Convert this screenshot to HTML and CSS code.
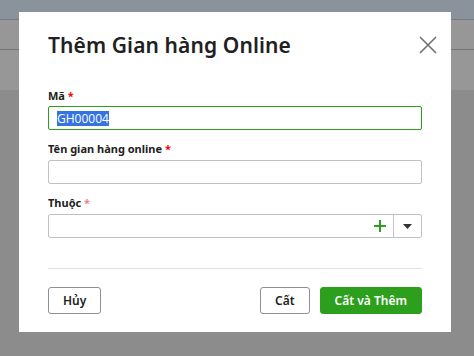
FILE: index.html
```html
<!DOCTYPE html>
<html>
<head>
    <title>Thêm Gian hàng Online</title>
    <link rel="stylesheet" href="styles.css">
</head>
<body>
    <div class="page">
        <div class="topbar"></div>
        <div class="toolbar"></div>
        <div class="subbar"></div>
        <div class="content"></div>
    </div>

    <div class="overlay">
        <div class="modal">
            <button class="close" aria-label="Đóng">
                <svg width="18" height="18" viewBox="0 0 18 18">
                    <path d="M1 1 L17 17 M17 1 L1 17" stroke="#6e6e6e" stroke-width="1.6" fill="none"/>
                </svg>
            </button>
            <h1>Thêm Gian hàng Online</h1>

            <div class="field">
                <label for="code">Mã <span class="req">*</span></label>
                <div class="input focus"><span class="sel">GH00004</span></div>
            </div>
            <div class="field">
                <label for="name">Tên gian hàng online <span class="req">*</span></label>
                <div class="input"></div>
            </div>
            <div class="field">
                <label for="parent">Thuộc <span class="req light">*</span></label>
                <div class="input combo">
                    <div class="combo-text"></div>
                    <span class="plus">
                        <svg width="12" height="12" viewBox="0 0 12 12">
                            <path d="M6 0 V12 M0 6 H12" stroke="#2ca01c" stroke-width="2"/>
                        </svg>
                    </span>
                    <span class="arrow">
                        <svg width="9" height="5" viewBox="0 0 9 5">
                            <path d="M0 0 H9 L4.5 5 Z" fill="#333"/>
                        </svg>
                    </span>
                </div>
            </div>

            <div class="footer">
                <button class="btn">Hủy</button>
                <div class="right">
                    <button class="btn">Cất</button>
                    <button class="btn primary">Cất và Thêm</button>
                </div>
            </div>
        </div>
    </div>
</body>
</html>
```

FILE: styles.css
```css
body {
    font-family: "Noto Sans", "Open Sans", sans-serif;
    margin: 0;
    padding: 0;
    background-color: #8c8c8d;
    height: 356px;
    overflow: hidden;
}

.topbar {
    height: 19px;
    background-color: #8a939c;
    border-bottom: 1px solid #747a80;
}

.toolbar {
    height: 29px;
    background-color: #979797;
    border-bottom: 1px solid #777;
}

.subbar {
    height: 40px;
    background-color: #979797;
}

.overlay {
    position: absolute;
    top: 0;
    left: 0;
    right: 0;
    bottom: 0;
}

.modal {
    position: absolute;
    left: 19px;
    top: 12px;
    width: 432px;
    height: 320px;
    background-color: #fff;
    box-sizing: border-box;
    padding: 20px 29px 0 29px;
}

.close {
    position: absolute;
    top: 24px;
    right: 14px;
    background: none;
    border: none;
    padding: 0;
    width: 18px;
    height: 18px;
    cursor: pointer;
}

h1 {
    font-size: 21px;
    font-weight: 600;
    color: #212121;
    margin: 0 0 31px 0;
    line-height: 26px;
    letter-spacing: 0.1px;
}

.field {
    margin-bottom: 12px;
}

label {
    display: block;
    font-size: 11px;
    font-weight: 700;
    color: #212121;
    line-height: 13px;
    margin-bottom: 4px;
}

.req {
    color: #e00;
}

.req.light {
    color: #f08080;
}

.input {
    height: 24px;
    border: 1px solid #bfc1c6;
    border-radius: 2px;
    box-sizing: border-box;
    display: flex;
    align-items: center;
    padding-left: 8px;
    font-size: 12px;
}

.field + .field label {
    margin-bottom: 5px;
}

.input.focus {
    border-color: #2ca01c;
}

.sel {
    background-color: #3574e0;
    color: #fff;
    line-height: 15px;
    font-family: "Open Sans", "Noto Sans", sans-serif;
}

.combo {
    padding: 0;
}

.combo-text {
    flex: 1;
}

.plus {
    display: flex;
    width: 26px;
    height: 100%;
    align-items: center;
    justify-content: center;
}

.arrow {
    display: flex;
    width: 27px;
    height: 100%;
    align-items: center;
    justify-content: center;
    border-left: 1px solid #bfc1c6;
}

.footer {
    margin-top: 30px;
    border-top: 1px solid #e0e0e0;
    padding-top: 18px;
    display: flex;
    justify-content: space-between;
}

.right {
    display: flex;
    gap: 10px;
}

.btn {
    font-family: "Noto Sans", "Open Sans", sans-serif;
    font-size: 12px;
    font-weight: 600;
    height: 27px;
    padding: 0 14px;
    border: 1px solid #8d9096;
    border-radius: 3px;
    background-color: #fff;
    color: #212121;
    cursor: pointer;
}

.btn.primary {
    background-color: #2ca01c;
    border-color: #2ca01c;
    color: #fff;
}
```
